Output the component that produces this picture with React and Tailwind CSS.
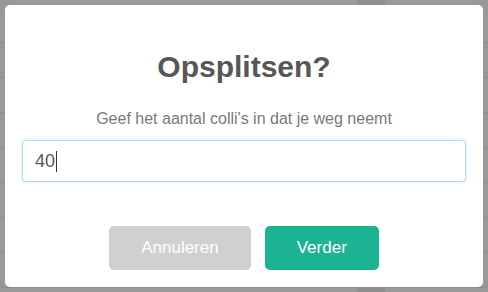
import React from 'react';

const rows = [0, 1, 2, 3, 4, 5, 6, 7, 8];

function App() {
  return (
    <div className="relative h-[292px] w-[488px] overflow-hidden bg-[#999999]" style={{ fontFamily: '"Liberation Sans", Arial, sans-serif' }}>
      {/* page behind the overlay */}
      <div className="flex flex-col pt-[8px]">
        {rows.map((r) => (
          <div key={r} className="h-[35px] border-b border-[#8e8e8e]" />
        ))}
      </div>
      <div className="absolute top-0 bottom-0 left-[357px] w-[28px] bg-[#8f8f8f]" />

      {/* overlay + modal */}
      <div className="absolute inset-0 flex items-center justify-center">
        <div className="flex h-[282px] w-[478px] flex-col items-center rounded-[5px] bg-white p-[17px]">
          <h2 className="mt-[25px] text-[30px] font-bold leading-[40px] text-[#575757]">Opsplitsen?</h2>
          <p className="mt-[23px] text-[16px] leading-[18px] text-[#797979]">Geef het aantal colli's in dat je weg neemt</p>
          <div className="mt-[12px] flex h-[42px] w-full items-center rounded-[3px] border border-[#b4dbed] pl-[12px] text-[18px] text-[#575757] shadow-[0_0_3px_#c4e6f5]">
            <span>40</span>
            <span className="ml-[1px] h-[21px] w-px bg-[#333]" />
          </div>
          <div className="mt-[44px] flex gap-[14px]">
            <button className="h-[44px] rounded-[5px] bg-[#d0d0d0] px-[32px] text-[17px] text-white">Annuleren</button>
            <button className="h-[44px] rounded-[5px] bg-[#1bb394] px-[32px] text-[17px] text-white">Verder</button>
          </div>
        </div>
      </div>
    </div>
  );
}

export default App;
